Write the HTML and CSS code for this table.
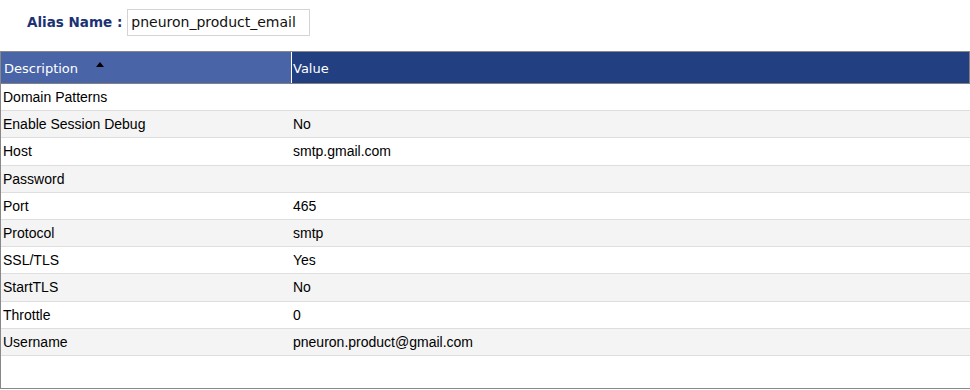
FILE: index.html
```html
<!DOCTYPE html>
<html>
<head>
<meta charset="utf-8">
<link rel="stylesheet" href="styles.css">
</head>
<body>
<div class="alias-bar">
  <span class="alias-label">Alias Name :</span>
  <div class="alias-input">pneuron_product_email</div>
</div>
<div class="grid-box">
  <div class="grid-head">
    <div class="hcell hcell-desc"><span>Description</span><span class="sort-up"></span></div>
    <div class="hcell hcell-value">Value</div>
  </div>
  <div class="row"><div class="cell">Domain Patterns</div><div class="cell val"></div></div>
  <div class="row alt"><div class="cell">Enable Session Debug</div><div class="cell val">No</div></div>
  <div class="row"><div class="cell">Host</div><div class="cell val">smtp.gmail.com</div></div>
  <div class="row alt"><div class="cell">Password</div><div class="cell val"></div></div>
  <div class="row"><div class="cell">Port</div><div class="cell val">465</div></div>
  <div class="row alt"><div class="cell">Protocol</div><div class="cell val">smtp</div></div>
  <div class="row"><div class="cell">SSL/TLS</div><div class="cell val">Yes</div></div>
  <div class="row alt"><div class="cell">StartTLS</div><div class="cell val">No</div></div>
  <div class="row"><div class="cell">Throttle</div><div class="cell val">0</div></div>
  <div class="row alt"><div class="cell">Username</div><div class="cell val">pneuron.product@gmail.com</div></div>
</div>
</body>
</html>
```
FILE: styles.css
```css
html, body {
  margin: 0;
  padding: 0;
  background: #ffffff;
}
body {
  font-family: "Liberation Sans", Arial, sans-serif;
  font-size: 14px;
  color: #000;
}
.alias-bar {
  height: 51px;
  box-sizing: border-box;
  padding: 9px 0 0 27px;
  display: flex;
  align-items: flex-start;
  gap: 5px;
}
.alias-label {
  font-family: "DejaVu Sans", Verdana, sans-serif;
  font-weight: bold;
  font-size: 13.5px;
  color: #1c3274;
  line-height: 27px;
}
.alias-input {
  width: 183px;
  height: 27px;
  box-sizing: border-box;
  border: 1px solid #d4d4d4;
  padding-left: 3px;
  font-family: "DejaVu Sans", Verdana, sans-serif;
  font-size: 14px;
  line-height: 25px;
  color: #111;
}
.grid-box {
  width: 970px;
  height: 336px;
  border-top: 1px solid #888888;
  border-left: 1px solid #888888;
  border-bottom: 1px solid #888888;
  box-sizing: content-box;
  overflow: hidden;
}
.grid-head {
  display: grid;
  grid-template-columns: 290px 1fr;
  border-bottom: 1px solid #808080;
  border-right: 1px solid #808080;
  box-sizing: border-box;
  height: 32px;
  width: 969px;
}
.hcell {
  font-family: "DejaVu Sans", Verdana, sans-serif;
  font-size: 13px;
  color: #ffffff;
  display: flex;
  align-items: center;
  padding-left: 3px;
  padding-top: 2px;
}
.hcell-desc {
  background: #4a64a8;
}
.hcell-value {
  background: #223f81;
  border-left: 1px solid #ffffff;
  padding-left: 1px;
}
.sort-up {
  width: 0;
  height: 0;
  border-left: 4px solid transparent;
  border-right: 4px solid transparent;
  border-bottom: 5px solid #000;
  margin-left: 18px;
  margin-bottom: 9px;
}
.row {
  display: grid;
  grid-template-columns: 291px 1fr;
  height: 27.2px;
  box-sizing: border-box;
  border-bottom: 1px solid #dedede;
  background: #ffffff;
}
.row.alt {
  background: #f4f4f4;
}
.cell {
  display: flex;
  align-items: center;
  padding-left: 2px;
  white-space: nowrap;
}
.cell.val {
  padding-left: 1px;
}
```
